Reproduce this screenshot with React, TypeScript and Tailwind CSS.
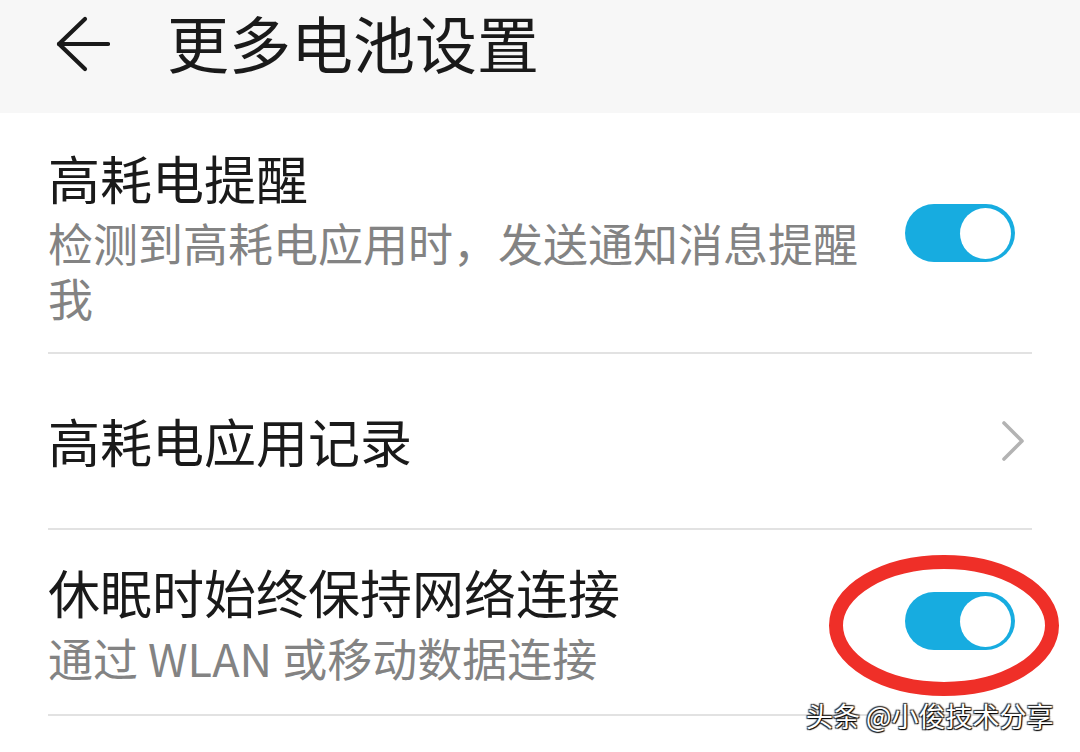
import React from "react";

const FONT = { fontFamily: '"Noto Sans CJK SC", "Noto Sans", sans-serif' };

function Toggle({ className = "" }: { className?: string }) {
  return (
    <div className={`flex h-[58px] w-[110px] shrink-0 items-center justify-end rounded-full bg-[#17ace0] pr-[4px] ${className}`}>
      <div className="h-[51px] w-[51px] rounded-full bg-white" />
    </div>
  );
}

function Divider() {
  return <div className="h-[2px] w-full bg-[#e2e2e2]" />;
}

export default function App() {
  return (
    <div className="relative h-[752px] w-[1080px] overflow-hidden bg-white text-[#1a1a1a]" style={FONT}>
      {/* Header */}
      <div className="flex h-[113px] items-start bg-[#f7f7f7] pl-[55px]">
        <svg className="mt-[16px] shrink-0" width="55" height="56" viewBox="0 0 55 56" fill="none">
          <path d="M30 3 L4 28 L30 53" stroke="#1a1a1a" strokeWidth="4.2" strokeLinecap="round" strokeLinejoin="round" />
          <path d="M4 28 H53" stroke="#1a1a1a" strokeWidth="4.2" strokeLinecap="round" />
        </svg>
        <div className="ml-[57px] mt-[6px] text-[62px] leading-[72px]">更多电池设置</div>
      </div>

      {/* List */}
      <div className="flex flex-col px-[48px]">
        {/* Row 1 */}
        <div className="flex items-center gap-[40px] pb-[27px] pt-[38px]">
          <div className="flex min-w-0 flex-1 flex-col">
            <div className="text-[52px] leading-[54px]">高耗电提醒</div>
            <div className="mt-[10px] text-[45px] leading-[55px] text-[#838383]">
              检测到高耗电应用时，发送通知消息提醒我
            </div>
          </div>
          <Toggle className="mb-[10px] mr-[17px]" />
        </div>
        <Divider />

        {/* Row 2 */}
        <div className="flex h-[174px] items-center justify-between">
          <div className="text-[52px] leading-[54px]">高耗电应用记录</div>
          <svg className="mr-[6px]" width="26" height="44" viewBox="0 0 26 44" fill="none">
            <path d="M4 4 L22 22 L4 40" stroke="#b3b3b3" strokeWidth="3.6" strokeLinecap="round" strokeLinejoin="round" />
          </svg>
        </div>
        <Divider />

        {/* Row 3 */}
        <div className="flex items-center gap-[40px] pb-[29px] pt-[35px]">
          <div className="flex min-w-0 flex-1 flex-col">
            <div className="text-[52px] leading-[54px]">休眠时始终保持网络连接</div>
            <div className="mt-[11px] text-[45px] leading-[55px] text-[#838383]">通过 WLAN 或移动数据连接</div>
          </div>
          <Toggle className="mb-[8px] mr-[17px]" />
        </div>
        <Divider />
      </div>

      {/* Red annotation ellipse */}
      <svg className="pointer-events-none absolute left-[829px] top-[555px]" width="230" height="141" viewBox="0 0 230 141" fill="none">
        <ellipse cx="115" cy="70.5" rx="108" ry="63.5" stroke="#ef2f28" strokeWidth="14" />
      </svg>

      {/* Watermark */}
      <div
        className="absolute left-[806px] top-[700px] whitespace-nowrap text-[27px] leading-[32px] text-white"
        style={{ textShadow: "1px 1px 1px #000, -1px -1px 1px #333, 1px -1px 1px #333, -1px 1px 1px #333" }}
      >
        头条 @小俊技术分享
      </div>
    </div>
  );
}
